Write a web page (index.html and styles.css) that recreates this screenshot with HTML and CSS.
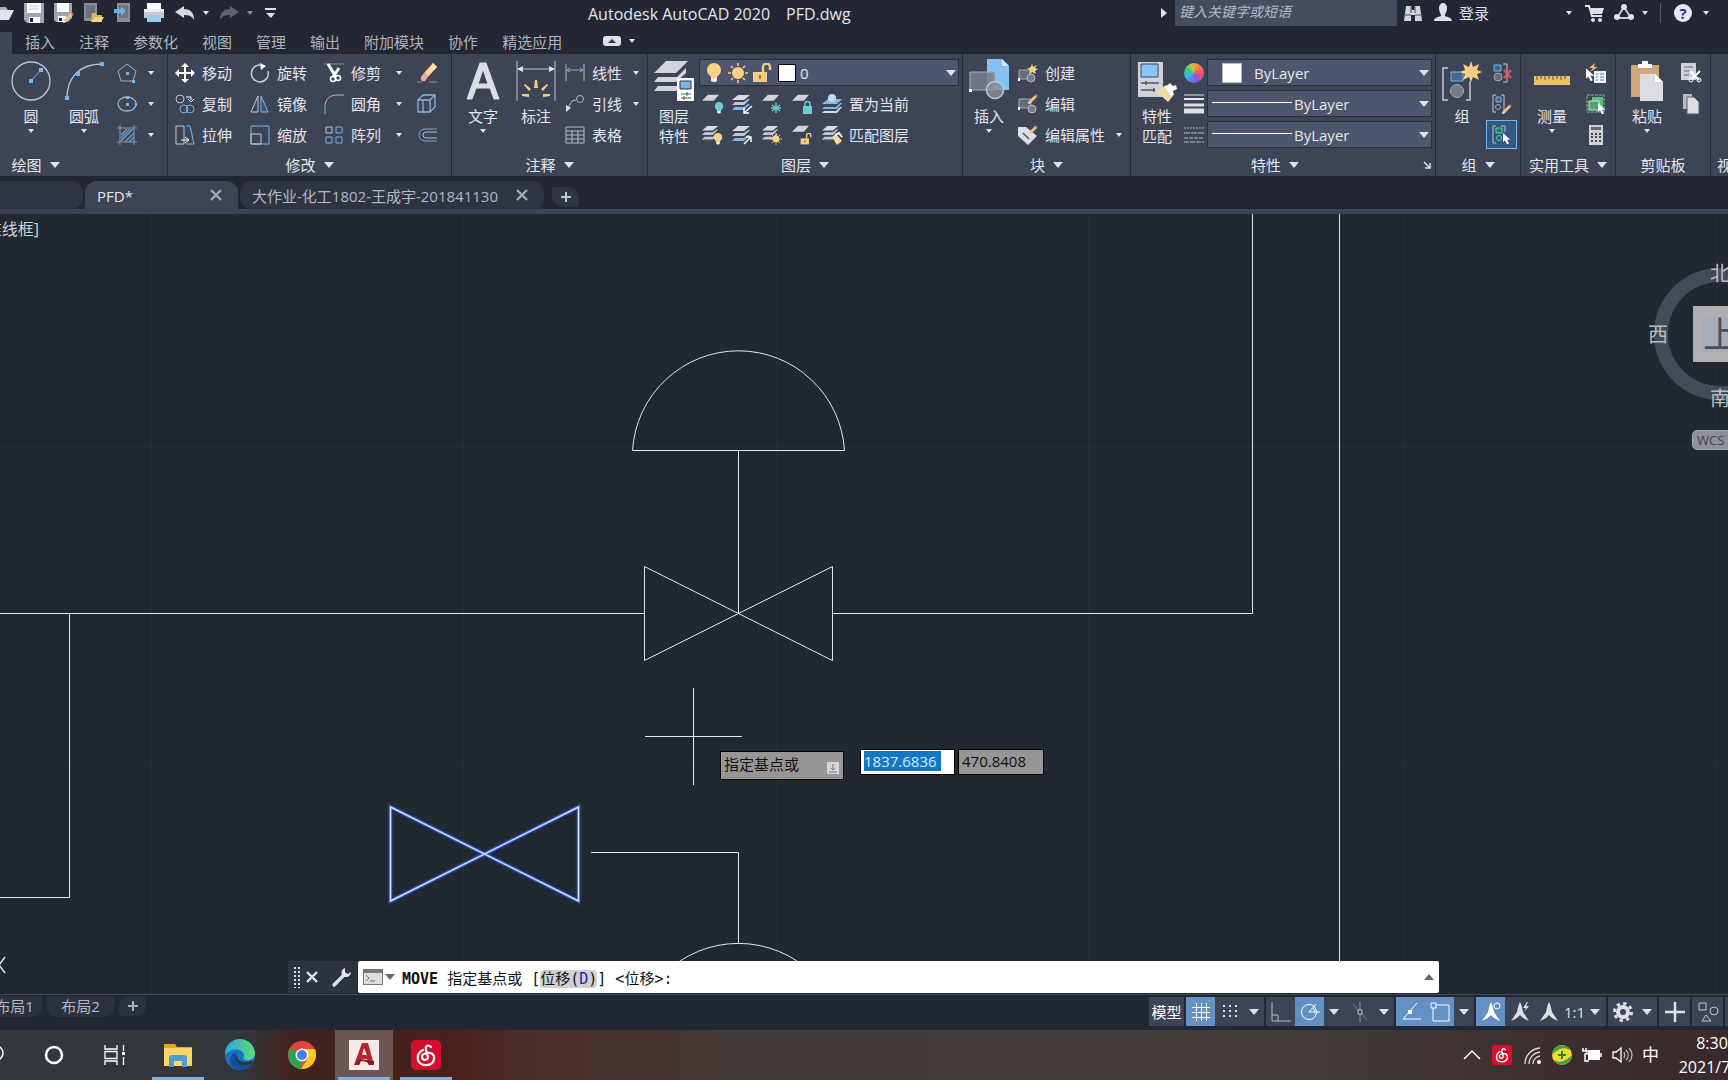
FILE: index.html
```html
<!DOCTYPE html>
<html lang="zh-CN">
<head>
<meta charset="utf-8">
<title>Autodesk AutoCAD 2020 - PFD.dwg</title>
<link rel="stylesheet" href="styles.css">
</head>
<body>
<svg class="sprite" aria-hidden="true">
  <symbol id="sheet" viewBox="0 0 20 20"><path d="M7 1h13l-6 7H0z" fill="#d3d5dd"/></symbol>
  <symbol id="stack" viewBox="0 0 20 20"><path d="M6 1h12l-6 5H0z" fill="#d9dbe2"/><path d="M1 10l2-2h9l4-3h2l-6 6H0zM1 15l2-2h9l4-3h2l-6 6H0z" fill="#c3c6d0"/></symbol>
  <symbol id="stackblue" viewBox="0 0 20 20"><path d="M6 1h12l-6 5H0z" fill="#d9dbe2"/><path d="M1 10l2-2h9l4-3h2l-6 6H0z" fill="#c3c6d0"/><path d="M1 15l2-2h9l4-3h2l-6 6H0z" fill="#7fb9ea"/></symbol>
  <symbol id="bulb" viewBox="0 0 20 20"><circle cx="10" cy="7" r="7" fill="currentColor"/><path d="M6 11h8l-1 4H7z" fill="currentColor"/><path d="M7 15h6v3l-2 1H9l-2-1z" fill="#e9eaf0"/></symbol>
  <symbol id="sun" viewBox="0 0 20 20"><circle cx="10" cy="10" r="6" fill="#f9d286"/><path d="M10 0v3M10 17v3M0 10h3M17 10h3M3 3l2 2M15 15l2 2M17 3l-2 2M3 17l2-2" stroke="#f9d286" stroke-width="1.5"/></symbol>
  <symbol id="unlock" viewBox="0 0 20 20"><path d="M1 9h14v10H1z" fill="#f5cd82"/><path d="M11 9V4a3 3 0 0 1 7 0v3" fill="none" stroke="#f5cd82" stroke-width="2.4"/><path d="M8 12v4" stroke="#a04a20" stroke-width="1.5"/></symbol>
  <symbol id="pencil" viewBox="0 0 20 20"><path d="M0 20l2-6L14 2l4 4L6 18z" fill="#f1c27e"/><path d="M14 2l2-2 4 4-2 2z" fill="#d7685f"/><path d="M0 20l2-6 4 4z" fill="#eee0cb"/></symbol>
  <symbol id="cursor" viewBox="0 0 12 18"><path d="M0 0v14l3-3 3 6 3-1-3-6h5z" fill="#fff"/></symbol>
  <symbol id="music" viewBox="0 0 30 30"><rect width="30" height="30" rx="5" fill="#d60f2c"/><path d="M20 7c-3-3-6-1-5 3l2 7a3 3 0 1 1-4-3c6-3 11 0 10 5-1 8-14 8-16 1-1-5 1-8 5-10" fill="none" stroke="#fff" stroke-width="2.2" stroke-linecap="round"/></symbol>
  <symbol id="north" viewBox="0 0 20 20"><path d="M10 0c2 3 2 7 3 10l6 9-6-3-3-3-3 3-6 3 6-9c1-3 1-7 3-10z" fill="currentColor"/></symbol>
  <symbol id="user" viewBox="0 0 18 20"><path d="M5 5a4 5 0 0 1 8 0c0 4-2 5-2 8 3 1 7 2 7 5H0c0-3 4-4 7-5 0-3-2-4-2-8z" fill="#dfe1e8"/></symbol>
  <symbol id="cross" viewBox="0 0 12 12"><path d="M1 1l10 10M11 1L1 11" stroke="currentColor" stroke-width="2.4"/></symbol>
</svg>

<header class="titlebar">
  <nav class="qat">
    <button aria-label="打开"><svg class="i20"><path d="M6 4h6l2 3h-8z" fill="#a9adb7"/><path d="M0 7h20l-5 10H0z" fill="#e3e4ea"/></svg></button>
    <button aria-label="保存"><svg class="i20"><path d="M0 0h20v20H3l-3-3z" fill="#a3a6ae"/><path d="M3 0h14v10H3z" fill="#fff"/><path d="M5 14h11v6H5z" fill="#fff"/><path d="M5 3h10M5 6h10" stroke="#c6c8ce"/><path d="M6 15h3v4H6z" fill="#222"/></svg></button>
    <button aria-label="另存为"><svg class="i20"><path d="M0 0h18v15l-4 4H2l-2-2z" fill="#a3a6ae"/><path d="M3 0h12v9H3zM4 13h8v6H4z" fill="#fff"/><path d="M5 15h3v3H5z" fill="#222"/><use href="#pencil" x="9" y="9" width="11" height="11"/></svg></button>
    <button aria-label="从移动设备打开"><svg class="i20"><path d="M0 0h13v18H0z" fill="#8a8e99"/><path d="M2 2h9v13H2z" fill="#6d717c"/><path d="M8 10h4l1 2h5v7H7z" fill="#e4b05c"/><path d="M11 14h9l-3 5H8z" fill="#f8d58d"/></svg></button>
    <button aria-label="保存到移动设备"><svg class="i20"><path d="M3 0h13v19H3z" fill="#8a8e99"/><path d="M5 2h9v13H5z" fill="#6d717c"/><path d="M0 6h7V3l5 5-5 5v-3H0z" fill="#64b5ee"/></svg></button>
    <button aria-label="打印"><svg class="i20"><path d="M3 0h14v7H3z" fill="#fff"/><path d="M0 6h20v9H0z" fill="#c6c8ce"/><path d="M0 6h20v3H0z" fill="#eee"/><path d="M3 12h14v7H3z" fill="#9ccbe9"/></svg></button>
    <button class="undo" aria-label="放弃"><svg class="i20"><path d="M0 9l9-6v3c7 0 10 4 10 11-2-4-5-5-10-5v3z" fill="#d8dae2"/></svg><i class="caret"></i></button>
    <button class="undo redo" aria-label="重做"><svg class="i20"><path d="M20 9l-9-6v3C4 6 1 10 1 17c2-4 5-5 10-5v3z" fill="#5d6270"/></svg><i class="caret"></i></button>
    <button aria-label="自定义"><svg class="i20"><path d="M1 6h11" stroke="#dfe1e8" stroke-width="2"/><path d="M2 10h9l-4 5z" fill="#dfe1e8"/></svg></button>
  </nav>
  <h1 class="apptitle"><span>Autodesk AutoCAD 2020</span><span>PFD.dwg</span></h1>
  <i class="play"></i>
  <input class="search" type="text" placeholder="键入关键字或短语" aria-label="搜索">
  <div class="account">
    <button class="b-find" aria-label="查找"><svg class="i20"><path d="M3 3h5l1 4h2l1-4h5l2 15h-7v-6H8v6H1z" fill="#d3d5dc"/><path d="M1 12h7M12 12h7M8 4v6M12 4v6" stroke="#4b5060"/></svg></button>
    <button class="b-login"><svg width="18" height="20"><use href="#user"/></svg>登录<i class="caret"></i></button>
    <button class="b-cart" aria-label="购物车"><svg class="i20"><path d="M0 3h4l3 10h10" fill="none" stroke="#dfe1e8" stroke-width="2"/><path d="M5 5h14l-2 6H7z" fill="#dfe1e8"/><circle cx="8" cy="17" r="2" fill="#dfe1e8"/><circle cx="15" cy="17" r="2" fill="#dfe1e8"/></svg></button>
    <button class="b-a360" aria-label="A360"><svg class="i20"><path d="M10 4L3 15h14z" fill="none" stroke="#c5cbe0" stroke-width="2"/><circle cx="10" cy="4" r="3" fill="#dfe1e8"/><circle cx="3" cy="14" r="3" fill="#dfe1e8"/><circle cx="17" cy="14" r="3" fill="#dfe1e8"/></svg><i class="caret"></i></button>
    <button class="b-help" aria-label="帮助"><span class="help">?</span><i class="caret"></i></button>
  </div>
</header>

<nav class="tabs">
  <i class="tab-on"></i>
  <a href="#">插入</a><a href="#">注释</a><a href="#">参数化</a><a href="#">视图</a><a href="#">管理</a><a href="#">输出</a><a href="#">附加模块</a><a href="#">协作</a><a href="#">精选应用</a>
  <button class="collapse" aria-label="最小化"><svg width="18" height="10"><rect width="18" height="10" rx="3" fill="#dfe1e8"/><path d="M5 7l4-4 4 4z" fill="#333846"/></svg><i class="caret"></i></button>
</nav>

<section class="ribbon">
  <div class="panel p-draw">
    <div class="body">
      <button class="big"><svg class="i40"><circle cx="20" cy="20" r="19" fill="none" stroke="#c3c7d2"/></svg><span>直线</span></button>
      <button class="big"><svg class="i40"><circle cx="20" cy="20" r="19" fill="none" stroke="#c3c7d2" stroke-width="1.3"/><path d="M20 20L30 9" stroke="#7db4e8"/><path d="M18 18h4v4h-4zM28 7h4v4h-4z" fill="#7db4e8"/></svg><span>圆</span><i class="caret"></i></button>
      <button class="big"><svg class="i40"><path d="M3 37C3 18 14 3 38 3" fill="none" stroke="#c3c7d2" stroke-width="1.3"/><path d="M1 35h4v4H1zM12 11h4v4h-4zM36 1h4v4h-4z" fill="#7db4e8"/></svg><span>圆弧</span><i class="caret"></i></button>
      <div class="col">
        <button class="sm wide" aria-label="多边形"><svg class="i20"><path d="M10 1l9 7-3 10H4L1 8z" fill="none" stroke="#aab0be"/><path d="M9 9h3v3H9zM15 17h3v3h-3z" fill="#7db4e8"/></svg><i class="caret"></i></button>
        <button class="sm wide" aria-label="椭圆"><svg class="i20"><ellipse cx="10" cy="10" rx="9" ry="7" fill="none" stroke="#aab0be" stroke-width="1.3"/><path d="M9 9h3v3H9zM9 2h3v3H9zM18 9h2v3h-2z" fill="#7db4e8"/></svg><i class="caret"></i></button>
        <button class="sm wide" aria-label="图案填充"><svg class="i20"><path d="M3 0v20M17 0v20M0 3h20M0 17h20" stroke="#8e95a5"/><path d="M4 10l6-6M4 16L16 4M8 17l9-9M4 13l9-9M12 17l5-5" stroke="#6da2d4" stroke-width="1.2"/></svg><i class="caret"></i></button>
      </div>
    </div>
    <div class="title">绘图<i class="caret lg"></i></div>
  </div>

  <div class="panel p-modify">
    <div class="body grid">
      <button class="sm"><svg class="i20"><path d="M10 2v16M2 10h16" stroke="#fff" stroke-width="2"/><path d="M10 0l4 4H6zM10 20l4-4H6zM0 10l4-4v8zM20 10l-4-4v8z" fill="#fff"/></svg>移动</button>
      <button class="sm"><svg class="i20"><path d="M11 2A8.500 8.500 0 1 0 18 8" fill="none" stroke="#c9cdd8" stroke-width="1.500"/><path d="M10 0l6 3-5 4z" fill="#fff"/></svg>旋转</button>
      <button class="sm"><svg class="i20"><path d="M0 1h20" stroke="#8990a0"/><path d="M4 1l8 13M15 5l-6 9" stroke="#fff" stroke-width="3"/><circle cx="9" cy="16" r="2.500" fill="none" stroke="#fff" stroke-width="1.500"/><circle cx="14" cy="15" r="2.500" fill="none" stroke="#fff" stroke-width="1.500"/></svg>修剪<i class="caret"></i></button>
      <button class="sm" aria-label="删除"><svg class="i20"><path d="M0 19h5M12 19h8" stroke="#8990a0"/><path d="M16 0l4 4-9 10-4-4z" fill="#f5cd82"/><path d="M16 0l4 4-2 2-8 5z" fill="#fbe3b0"/><path d="M7 10l4 4-3 4c-3 1-5-1-4-4z" fill="#eab0a5"/></svg></button>
      <button class="sm"><svg class="i20"><circle cx="5" cy="5" r="4" fill="none" stroke="#c3c7d2"/><path d="M11 3h5v3M13 5l3 3 3-3" stroke="#fff" fill="none"/><circle cx="9" cy="15" r="4" fill="none" stroke="#7db4e8"/><circle cx="15" cy="15" r="4" fill="none" stroke="#7db4e8"/></svg>复制</button>
      <button class="sm"><svg class="i20"><path d="M8 2v16H1z" fill="none" stroke="#c3c7d2"/><path d="M11 2v16h7z" fill="#35567c" stroke="#7db4e8"/></svg>镜像</button>
      <button class="sm"><svg class="i20"><path d="M1 20v-7" stroke="#7db4e8"/><path d="M1 13C1 5 6 1 13 1h7" fill="none" stroke="#b4bac8"/></svg>圆角<i class="caret"></i></button>
      <button class="sm" aria-label="分解"><svg class="i20"><path d="M1 6h12v12H1zM1 6l5-5h12v12l-5 5M13 6l5-5M6 6v12" fill="none" stroke="#8db2d8" stroke-width="1.300"/></svg></button>
      <button class="sm"><svg class="i20"><path d="M1 1h8v18H1z" fill="none" stroke="#c3c7d2"/><path d="M11 1h4l4 18h-8" fill="none" stroke="#7db4e8"/><path d="M6 15h7M10 12l4 3-4 3" stroke="#fff" fill="none"/></svg>拉伸</button>
      <button class="sm"><svg class="i20"><path d="M1 1h18v18H1z" fill="none" stroke="#7db4e8"/><path d="M1 9h10v10H1z" fill="none" stroke="#c3c7d2"/></svg>缩放</button>
      <button class="sm"><svg class="i20"><path d="M2 2h6v6H2z" fill="none" stroke="#c3c7d2"/><path d="M12 2h6v6h-6zM2 12h6v6H2zM12 12h6v6h-6z" fill="none" stroke="#7db4e8"/></svg>阵列<i class="caret"></i></button>
      <button class="sm" aria-label="偏移"><svg class="i20"><path d="M20 4H8a6 6 0 0 0 0 12h12" fill="none" stroke="#7da6d0"/><path d="M20 7H9a3 3 0 0 0 0 6h11" fill="none" stroke="#b4bac8"/></svg></button>
    </div>
    <div class="title">修改<i class="caret lg"></i></div>
  </div>

  <div class="panel p-note">
    <div class="body">
      <button class="big"><svg class="i40"><path d="M4 38L17 2h6l13 36h-5l-4-11H13L9 38zM15 23h10L20 8z" fill="#dcdee6" stroke="#dcdee6"/></svg><span>文字</span><i class="caret"></i></button>
      <button class="big"><svg class="i40"><path d="M1 0v40M39 0v40M2 8h36" stroke="#c3c7d2"/><path d="M1 8l6-3v6zM39 8l-6-3v6z" fill="#dfe1e8"/><path d="M18 27l1-8h2l1 8zM13 30l-5-6 1-1 6 5zM27 30l5-6-1-1-6 5zM13 36l-7-1v-2l7 0zM27 36l7-1v-2l-7 0z" fill="#f5cd82"/></svg><span>标注</span></button>
      <div class="col">
        <button class="sm"><svg class="i20"><path d="M1 1v17M19 1v17" stroke="#b4bac8"/><path d="M2 7h16M5 5L2 7l3 2M15 5l3 2-3 2" fill="none" stroke="#7db4e8"/></svg>线性<i class="caret"></i></button>
        <button class="sm"><svg class="i20"><circle cx="15" cy="5" r="3.500" fill="none" stroke="#b4bac8"/><path d="M11 6L7 7 3 14" fill="none" stroke="#b4bac8"/><path d="M1 18v-7l5 3z" fill="#dfe1e8"/></svg>引线<i class="caret"></i></button>
        <button class="sm"><svg class="i20"><path d="M1 2h18v16H1zM1 6h18M1 10h18M1 14h18M7 6v12M13 6v12" fill="none" stroke="#b4bac8"/></svg>表格</button>
      </div>
    </div>
    <div class="title">注释<i class="caret lg"></i></div>
  </div>

  <div class="panel p-layer">
    <div class="body">
      <button class="big two"><svg class="i40"><path d="M12 0h22L22 12H0zM0 21l4-5h19l9-9v5L22 21zM0 30l4-5h19l9-9v5L22 30z" fill="#d3d5dd"/><path d="M23 17h17v23H23z" fill="#fff"/><path d="M26 20h11v8H26z" fill="#7db4e8" stroke="#333"/><path d="M27 33h10M27 37h10M33 31v4M30 35v4" stroke="#555"/></svg><span>图层<br>特性</span></button>
      <div class="col">
        <div class="combo layercombo">
          <svg class="i20 amber"><use href="#bulb"/></svg><svg class="i20"><use href="#sun"/></svg><svg class="i20"><use href="#unlock"/></svg><i class="swatch"></i>
          <select aria-label="图层"><option>0</option></select><i class="caret lg"></i>
        </div>
        <div class="row">
          <button class="sm" aria-label="关闭"><svg class="i20"><use href="#sheet" width="17" height="17"/><use href="#bulb" x="11" y="8" width="12" height="12" color="#69cfd6"/></svg></button>
          <button class="sm" aria-label="隔离"><svg class="i20"><use href="#stackblue"/><path d="M12 19l8-7M12 14v5h5" stroke="#fff" stroke-width="1.500" fill="none"/></svg></button>
          <button class="sm" aria-label="冻结"><svg class="i20"><use href="#sheet" width="17" height="17"/><path d="M14 9v10M10 11l8 6M18 11l-8 6M9 14h10" stroke="#69cfd6" stroke-width="1.500"/></svg></button>
          <button class="sm" aria-label="锁定"><svg class="i20"><use href="#sheet" width="17" height="17"/><path d="M11 12h9v8h-9z" fill="#69cfd6"/><path d="M13 12v-2a2 2 0 0 1 5 0v2" fill="none" stroke="#69cfd6" stroke-width="1.500"/></svg></button>
          <button class="sm"><svg class="i20"><path d="M6 5h14l-5 5H0zM0 15l2-2h12l4-4h2l-5 6z" fill="#7fb9ea"/><path d="M0 19l2-2h12l4-4h2l-5 6z" fill="#d9dbe2"/><circle cx="10" cy="4" r="4" fill="#bcdcf6"/></svg>置为当前</button>
        </div>
        <div class="row">
          <button class="sm" aria-label="打开所有图层"><svg class="i20"><use href="#stack" width="18" height="18"/><use href="#bulb" x="10" y="8" width="12" height="12" color="#f9d286"/></svg></button>
          <button class="sm" aria-label="取消隔离"><svg class="i20"><use href="#stackblue"/><path d="M12 19l7-7M14 12h5v5" stroke="#fff" stroke-width="1.500" fill="none"/></svg></button>
          <button class="sm" aria-label="解冻"><svg class="i20"><use href="#stack" width="18" height="18"/><use href="#sun" x="8" y="8" width="12" height="12"/></svg></button>
          <button class="sm" aria-label="解锁"><svg class="i20"><use href="#sheet" width="17" height="17"/><use href="#unlock" x="8" y="8" width="12" height="12"/></svg></button>
          <button class="sm"><svg class="i20"><use href="#stack" width="18" height="18"/><path d="M10 12l4-3 6 7-5 4z" fill="#f5d9a0"/><path d="M13 10l4-2 3 4" stroke="#fff" stroke-width="2" fill="none"/></svg>匹配图层</button>
        </div>
      </div>
    </div>
    <div class="title">图层<i class="caret lg"></i></div>
  </div>

  <div class="panel p-block">
    <div class="body">
      <button class="big"><svg class="i40"><path d="M18-2h15l7 7v24H18z" fill="#84c2f2"/><path d="M33-2v7h7z" fill="#cfe7fa"/><path d="M1 11h25v18H1z" fill="#7b7f8c" fill-opacity=".85" stroke="#a5a9b3"/><circle cx="26" cy="29" r="8.500" fill="#8b8f9b" fill-opacity=".8" stroke="#c3c7d2" stroke-width="1.500"/><path d="M0 28h3v3H0z" fill="#fff"/></svg><span>插入</span><i class="caret"></i></button>
      <div class="col">
        <button class="sm"><svg class="i20"><path d="M1 7h12v9H1z" fill="#666b7a" stroke="#a5a9b3"/><circle cx="13" cy="15" r="4" fill="#777c8a" stroke="#b5b9c4"/><path d="M14 0l1 4 4-2-2 3 3 1-3 2 1 3-4-2-3 2 1-4-3-1 4-2z" fill="#f9cf82"/><path d="M0 15h2v3H0z" fill="#fff"/></svg>创建</button>
        <button class="sm"><svg class="i20"><path d="M1 5h12v9H1z" fill="#666b7a" stroke="#a5a9b3"/><circle cx="14" cy="15" r="4" fill="#777c8a" stroke="#b5b9c4"/><use href="#pencil" x="10" y="0" width="10" height="10"/><path d="M0 13h2v3H0z" fill="#fff"/></svg>编辑</button>
        <button class="sm"><svg class="i20"><path d="M0 2h8l11 9-9 9L0 11z" fill="#dcdee6"/><path d="M5 8l6 6" stroke="#555" stroke-width="1.500"/><use href="#pencil" x="10" y="0" width="10" height="10"/></svg>编辑属性<i class="caret"></i></button>
      </div>
    </div>
    <div class="title">块<i class="caret lg"></i></div>
  </div>

  <div class="panel p-props">
    <div class="body">
      <button class="big two"><svg class="i40"><path d="M1 1h25v35H1z" fill="#d0d2d9"/><path d="M4 3h17v13H4z" fill="#86c5f4" stroke="#444"/><path d="M4 22h18M4 29h14M9 20v4M17 27v4" stroke="#555" stroke-width="1.500"/><path d="M19 30l9-5 8 10-5 6z" fill="#f5d9a0"/><path d="M27 25l4-1 2-2 3 3 3-1 1 4-4 2 1 4-3 1z" fill="#fff"/></svg><span>特性<br>匹配</span></button>
      <div class="col icons">
        <i class="wheel"></i>
        <svg class="i20"><path d="M0 1h20" stroke="#dfe1e8"/><path d="M0 5h20" stroke="#dfe1e8" stroke-width="2"/><path d="M0 11h20" stroke="#dfe1e8" stroke-width="3"/><path d="M0 17h20" stroke="#dfe1e8" stroke-width="5"/></svg>
        <svg class="i20"><path d="M0 3h20" stroke="#b4bac8" stroke-dasharray="2 1"/><path d="M0 8h20" stroke="#b4bac8" stroke-dasharray="6 1"/><path d="M0 13h20" stroke="#b4bac8" stroke-dasharray="4 1"/><path d="M0 17h20" stroke="#b4bac8" stroke-dasharray="5 1"/></svg>
      </div>
      <div class="col combos">
        <div class="combo"><i class="swatch light"></i><select aria-label="颜色"><option>ByLayer</option></select><i class="caret lg"></i></div>
        <div class="combo"><i class="rule"></i><select aria-label="线宽"><option>ByLayer</option></select><i class="caret lg"></i></div>
        <div class="combo"><i class="rule"></i><select aria-label="线型"><option>ByLayer</option></select><i class="caret lg"></i></div>
      </div>
    </div>
    <div class="title"><span class="grow">特性<i class="caret lg"></i></span><svg width="12" height="12"><path d="M3 3l5 5M9 4v5H4" stroke="#dfe1e8" stroke-width="1.500" fill="none"/></svg></div>
  </div>

  <div class="panel p-group">
    <div class="body">
      <button class="big"><svg class="i40"><path d="M6 7H1v32h5M24 39h4V20" fill="none" stroke="#c3c7d2" stroke-width="1.500"/><path d="M9 11h12v9H9z" fill="#41698f" stroke="#7db4e8"/><circle cx="15" cy="30" r="6.500" fill="#767b88" stroke="#a5a9b3"/><path d="M29 0l2 6 6-3-2 6 5 2-5 2 2 6-6-3-2 5-2-5-6 3 2-6-5-2 5-2-2-6 6 3z" fill="#f9cf82"/></svg><span>组</span></button>
      <div class="col">
        <button class="sm" aria-label="解除编组"><svg class="i20"><path d="M2 2h7v6H2z" fill="#41698f" stroke="#7db4e8"/><circle cx="6" cy="14" r="4" fill="#666b7a" stroke="#a5a9b3"/><path d="M11 1h4v18h-4" fill="none" stroke="#c3c7d2"/><path d="M12 7l7 8M19 7l-7 8" stroke="#e05560" stroke-width="2"/></svg></button>
        <button class="sm" aria-label="组编辑"><svg class="i20"><path d="M4 1H1v17h3M9 1h3v17" fill="none" stroke="#c3c7d2"/><path d="M4 3h5v5H4z" fill="#41698f" stroke="#7db4e8"/><circle cx="6" cy="13" r="2.500" fill="none" stroke="#a5a9b3"/><use href="#pencil" x="10" y="10" width="10" height="10"/></svg></button>
        <button class="sm on" aria-label="组选择"><svg class="i20"><path d="M4 1H1v17h3M9 1h4v6" fill="none" stroke="#c3c7d2"/><path d="M4 3h6v5H4z" fill="#2c7a66" stroke="#5fd19a"/><circle cx="7" cy="13" r="2.500" fill="none" stroke="#5fd19a"/><use href="#cursor" x="11" y="8" width="8" height="12"/></svg></button>
      </div>
    </div>
    <div class="title">组<i class="caret lg"></i></div>
  </div>

  <div class="panel p-util">
    <div class="body">
      <button class="big"><svg class="i40"><path d="M2 15h36v9H2z" fill="#f0bf6a"/><path d="M5 15v4M9 15v3M13 15v4M17 15v3M21 15v4M25 15v3M29 15v4M33 15v3" stroke="#5b4a2c"/></svg><span>测量</span><i class="caret"></i></button>
      <div class="col">
        <button class="sm" aria-label="快速选择"><svg class="i20"><path d="M9 0L3 5h4L4 9l8-5H8z" fill="#f5b76c"/><use href="#cursor" x="0" y="5" width="9" height="14"/><path d="M8 8h12v12H8z" fill="#eef4fa"/><path d="M10 11h2M14 11h4M10 14h2M14 14h4M10 17h2M14 17h4" stroke="#4b7fb0"/></svg></button>
        <button class="sm" aria-label="全部选择"><svg class="i20"><path d="M1 1h17v17H1z" fill="none" stroke="#5fd19a" stroke-dasharray="3 1"/><path d="M6 3h11v10H6z" fill="#60bd7b"/><path d="M3 7h10v9H3z" fill="#4fa56b" stroke="#c8f0d4"/><use href="#cursor" x="12" y="9" width="8" height="12"/></svg></button>
        <button class="sm" aria-label="计算器"><svg class="i20"><path d="M3 0h14v20H3z" fill="#cfd1d8"/><path d="M5 2h10v3H5z" fill="#666"/><path d="M5 9h10M5 12h10M5 16h10" stroke="#444" stroke-width="2" stroke-dasharray="2 2"/></svg></button>
      </div>
    </div>
    <div class="title">实用工具<i class="caret lg"></i></div>
  </div>

  <div class="panel p-clip">
    <div class="body">
      <button class="big"><svg class="i40"><path d="M4 4h28v32H4z" fill="#d0a87a"/><path d="M11 3h4V0h6v3h4v4H11z" fill="#fff"/><path d="M13 13h15l8 8v19H13z" fill="#dcdce1"/><path d="M28 13v8h8z" fill="#fff"/></svg><span>粘贴</span><i class="caret"></i></button>
      <div class="col">
        <button class="sm" aria-label="剪切"><svg class="i20"><path d="M0 0h15v17H0z" fill="#cfd1d8"/><path d="M3 4h9M3 8h7M3 12h5" stroke="#666"/><path d="M9 8l9 9M19 8l-8 8" stroke="#fff" stroke-width="2"/><circle cx="10" cy="17" r="2" fill="none" stroke="#fff"/><circle cx="18" cy="17" r="2" fill="none" stroke="#fff"/></svg></button>
        <button class="sm" aria-label="复制"><svg class="i20"><path d="M2 0h9v15H2z" fill="#b8bac2"/><path d="M6 3h7l5 5v12H6z" fill="#dcdce1" stroke="#555a68"/></svg></button>
      </div>
    </div>
    <div class="title">剪贴板</div>
  </div>
  <div class="panel p-view"><div class="body"></div><div class="title">视图</div></div>
</section>

<nav class="files">
  <a class="ftab start" href="#" aria-label="开始"></a>
  <a class="ftab cur" href="#">PFD*<svg width="12" height="12"><use href="#cross"/></svg></a>
  <a class="ftab third" href="#">大作业-化工1802-王成宇-201841130<svg width="12" height="12"><use href="#cross"/></svg></a>
  <button class="fplus" aria-label="新图形"><svg width="12" height="12"><path d="M6 1v10M1 6h10" stroke="#c3c7d2" stroke-width="2"/></svg></button>
</nav>

<main class="canvas">
  <svg class="drawing" aria-hidden="true">
    <g transform="translate(0 -214)" fill="none" stroke="#e4e7ea">
      <path d="M151.500 214v781M463.500 214v781M776.500 214v781M1403.500 214v781M1716.500 214v781M0 447.500h1728M0 761.500h1728" stroke="#262d38"/>
      <path d="M1089.500 214v781" stroke="#293148"/>
      <path d="M1252.500 214v399.500M1339.500 214v760M0 613.500h644.500M832.500 613.500h420M69.500 613.500v284H0"/>
      <path d="M632.500 450.500A106.200 106.200 0 0 1 844.500 450.500zM738.500 450.500v163"/>
      <path d="M644.500 566.500v94l188-94v94z"/>
      <path d="M645 736.500h97M693.500 688v97"/>
      <path d="M591 852.500h147.500v91M664 974A106 106 0 0 1 813 974"/>
      <path d="M390.500 807v94l188-94v94z" stroke="#1f3f9a" stroke-width="6" stroke-opacity=".5"/>
      <path d="M390.500 807v94l188-94v94z" stroke="#3a5fc4" stroke-width="3"/>
      <path d="M390.500 807v94l188-94v94z" stroke="#cfdcfb" stroke-width="1.500"/>
      <path d="M5 957l-6 8 6 8" stroke-width="1.500"/>
    </g>
  </svg>
  <div class="viewlabel">[-][俯视][二维线框]</div>

  <div class="cube">
    <i class="ring"></i>
    <span class="dir n">北</span><span class="dir w">西</span><span class="dir s">南</span>
    <span class="face"><b>上</b></span>
    <button class="wcs">WCS</button>
  </div>

  <div class="tip">指定基点或<svg width="12" height="12"><rect width="12" height="12" fill="#d5d5d7"/><path d="M6 2v6M4 6l2 2 2-2M2 10h8" stroke="#777" fill="none"/></svg></div>
  <div class="coords"><input class="cx" value="1837.6836" aria-label="X"><input class="cy" value="470.8408" aria-label="Y"></div>

  <div class="cmd">
    <div class="handle">
      <i class="grip"></i>
      <button aria-label="关闭"><svg width="12" height="12"><use href="#cross"/></svg></button>
      <button aria-label="自定义"><svg class="i20"><path d="M2 18L13 7" stroke="#dfe1e8" stroke-width="3.500" stroke-linecap="round"/><path d="M13 1a5 5 0 0 0-3 7l3 2a5 5 0 0 0 6-5l-3 2-3-1V3z" fill="#dfe1e8"/></svg></button>
    </div>
    <div class="line">
      <svg width="20" height="16"><rect x=".5" y=".5" width="19" height="15" fill="#ddd" stroke="#777"/><path d="M0 0h20v4H0z" fill="#777"/><path d="M3 6l3 3-3 3M7 12h5" stroke="#777" fill="none"/></svg><i class="caret dark"></i>
      <p><b>MOVE</b> 指定基点或 [<a href="#">位移(<em>D</em>)</a>] &lt;位移&gt;:</p>
      <i class="up"></i>
    </div>
  </div>
</main>

<footer class="status">
  <nav class="layouts">
    <a class="l1" href="#">布局1</a><a href="#">布局2</a>
    <button aria-label="新建布局"><svg width="12" height="12"><path d="M6 1v10M1 6h10" stroke="#a9adb8" stroke-width="2"/></svg></button>
  </nav>
  <div class="modes">
    <div class="grp"><button class="model">模型</button></div>
    <div class="grp">
      <button class="on" aria-label="栅格"><svg class="i20"><path d="M5.500 1v18M10.500 1v18M15.500 1v18M1 5.500h18M1 10.500h18M1 15.500h18" stroke="#fff"/></svg></button>
      <button aria-label="捕捉"><svg class="i20"><path d="M3 4h14M3 9h14M3 14h14" stroke="#dfe1e8" stroke-width="2" stroke-dasharray="2 4"/></svg></button><i class="caret lg"></i>
    </div>
    <div class="grp">
      <button aria-label="正交"><svg class="i20"><path d="M1 0v19h19M1 13h6v6" fill="none" stroke="#b4bac8"/></svg></button>
      <button class="on" aria-label="极轴"><svg class="i20"><circle cx="9" cy="10" r="7.500" fill="none" stroke="#fff"/><path d="M9 10h11M9 10l7-8M13 6l2 4" stroke="#fff" fill="none"/></svg></button><i class="caret lg"></i>
      <button aria-label="等轴测"><svg class="i20"><path d="M10 0v20" stroke="#8990a0"/><path d="M3 2l14 16" stroke="#a07878"/><path d="M8 8h4v4H8z" fill="#3d4456" stroke="#b4bac8"/></svg></button><i class="caret lg"></i>
    </div>
    <div class="grp">
      <button class="on" aria-label="对象捕捉追踪"><svg class="i20"><path d="M16 1L2 17h18" fill="none" stroke="#fff"/><path d="M7 8h4v4H7z" fill="#fff"/></svg></button>
      <button class="on" aria-label="对象捕捉"><svg class="i20"><path d="M3 3h16v16H3z" fill="none" stroke="#fff"/><path d="M1 1h5v5H1z" fill="#6590c4" stroke="#fff"/></svg></button><i class="caret lg"></i>
    </div>
    <div class="grp">
      <button class="on" aria-label="注释可见性"><svg class="i20"><use href="#north" color="#fff"/><circle cx="16" cy="4" r="3" fill="#6590c4" stroke="#fff"/></svg></button>
      <button aria-label="自动缩放"><svg class="i20"><use href="#north"/><path d="M17 0l-4 6h3l-2 4 5-6h-3l2-4z" fill="#dfe1e8"/></svg></button>
      <button aria-label="注释比例"><svg class="i20"><use href="#north"/></svg></button>
      <button class="scale">1:1<i class="caret lg"></i></button>
    </div>
    <div class="grp">
      <button aria-label="切换工作空间"><svg class="i20"><circle cx="10" cy="10" r="5" fill="none" stroke="#dfe1e8" stroke-width="4"/><circle cx="10" cy="10" r="8.500" fill="none" stroke="#dfe1e8" stroke-width="3" stroke-dasharray="3.300 3.370"/></svg></button><i class="caret lg"></i>
    </div>
    <div class="grp"><button aria-label="注释监视器"><svg class="i20"><path d="M10 0v20M0 10h20" stroke="#dfe1e8" stroke-width="2.500"/></svg></button></div>
    <div class="grp"><button aria-label="隔离对象"><svg class="i20"><path d="M1 1h7v7H1zM8 13l5 6H4z" fill="none" stroke="#c3c7d2"/><circle cx="16" cy="9" r="4" fill="none" stroke="#c3c7d2"/></svg></button></div>
    <div class="grp sliver"></div>
  </div>
</footer>

<footer class="taskbar">
  <div class="apps">
    <button aria-label="搜索"><svg width="30" height="30"><circle cx="19" cy="13" r="7" fill="none" stroke="#fff" stroke-width="1.500"/></svg></button>
    <button aria-label="Cortana"><svg width="30" height="30"><circle cx="15" cy="15" r="8" fill="none" stroke="#fff" stroke-width="2.500"/></svg></button>
    <button aria-label="任务视图"><svg width="30" height="30"><path d="M4 5v4h12V5M4 25v-4h12v4M4 11.500h12v7H4zM22.500 5v6M22.500 17v8" stroke="#fff" fill="none" stroke-width="1.300"/><path d="M21 12h3v3h-3z" fill="#fff"/></svg></button>
    <button class="run" aria-label="文件资源管理器"><svg width="30" height="30"><path d="M1 4h11l2 3h15v19H1z" fill="#e5a62d"/><path d="M1 8h28v18H1z" fill="#fbd667"/><path d="M6 27v-9c0-2 1-3 3-3h12c2 0 3 1 3 3v9h-5v-6h-8v6z" fill="#4b9cd3"/></svg></button>
    <button aria-label="Edge"><svg width="30" height="30"><defs><linearGradient id="ea" x1="0" x2="1"><stop offset="0" stop-color="#2aa5e0"/><stop offset="1" stop-color="#5ddc72"/></linearGradient></defs><circle cx="15" cy="15" r="15" fill="#1673c8"/><path d="M0 15a15 15 0 0 1 30-2c0 6-5 8-10 7-2-1-2-2-1-4 1-6-10-9-15-4-2 1-3 2-4 3z" fill="url(#ea)"/><path d="M11 16c0 6 7 10 16 7-4 7-14 9-20 3-5-5-1-12 5-14z" fill="#0d4f9e"/><path d="M14 13c-4 3-1 9 6 9 3 0 6-1 8-2l-1 4c-9 3-17 0-16-7z" fill="#333133"/></svg></button>
    <button aria-label="Chrome"><svg width="30" height="30"><circle cx="15" cy="15" r="14" fill="#e2453a"/><path d="M15 15L3 8a14 14 0 0 0 11 21z" fill="#2fa24f"/><path d="M15 15h14a14 14 0 0 1-15 14l7-11z" fill="#fbc91f"/><path d="M15 9h13a14 14 0 0 1 1 6l-7 3z" fill="#fbc91f"/><circle cx="15" cy="15" r="6.500" fill="#fff"/><circle cx="15" cy="15" r="5" fill="#4180e8"/></svg></button>
    <button class="run active" aria-label="AutoCAD"><svg width="30" height="30"><path d="M0 0h30v30H0z" fill="#f6e9e7"/><path d="M5 25L13 3h6l6 22h-5l-2-6h-6l-2 6z" fill="#b3262b"/><path d="M13 15l2-7 3 7z" fill="#f6e9e7"/><path d="M5 25l6-6 14 2v4h-5l-2-3-6-1-2 4z" fill="#8a1a20"/></svg></button>
    <button class="run" aria-label="网易云音乐"><svg width="30" height="30"><use href="#music"/></svg></button>
  </div>
  <div class="tray">
    <svg class="i20"><path d="M2 14l8-8 8 8" fill="none" stroke="#fff" stroke-width="1.500"/></svg>
    <svg class="i20"><use href="#music"/></svg>
    <svg class="i20"><g fill="none" stroke="#ddd" stroke-width="1.300"><path d="M3 19A16 16 0 0 1 18 3M7 19A12 12 0 0 1 18 7M11 19a8 8 0 0 1 7-8"/></g><circle cx="17" cy="17" r="2" fill="#fff"/></svg>
    <svg class="i20"><circle cx="10" cy="10" r="10" fill="#f6d730"/><path d="M0 10a10 10 0 0 1 19-4C14 2 8 2 0 10zM20 10a10 10 0 0 1-19 4c5 4 11 4 19-4z" fill="#38a24c"/><path d="M10 6v8M6 10h8" stroke="#23823a" stroke-width="2"/></svg>
    <svg class="i20"><path d="M6 5h12v10H6z" fill="#fff"/><path d="M19 8v4M1 3v3M4 3v3M0 6h5v3H3v7h4" stroke="#fff" fill="none" stroke-width="1.500"/></svg>
    <svg class="i20"><path d="M1 7h3l5-4v14l-5-4H1z" fill="none" stroke="#fff" stroke-width="1.300"/><path d="M12 7c1 2 1 4 0 6M14 5c3 3 3 7 0 10M17 3c4 4 4 10 0 14" fill="none" stroke="#bbb" stroke-width="1.300"/></svg>
    <span class="ime">中</span>
    <time class="clock"><span>8:30</span><span>2021/7/3</span></time>
  </div>
</footer>
</body>
</html>
```
FILE: styles.css
```css
* { box-sizing: border-box; }
html, body { margin: 0; height: 100%; }
body {
  display: flex;
  flex-direction: column;
  min-height: 100vh;
  overflow: hidden;
  background: #222733;
  color: #e4e6ee;
  font: 15px/20px "Open Sans", "Noto Sans CJK SC", sans-serif;
}
button, input, select { font: inherit; color: inherit; border: 0; background: none; padding: 0; margin: 0; }
button { display: flex; align-items: center; white-space: nowrap; }
a { color: inherit; text-decoration: none; white-space: nowrap; }
svg { display: block; flex: none; overflow: visible; }
.sprite { position: absolute; width: 0; height: 0; }
.i20 { width: 20px; height: 20px; }
.i40 { width: 40px; height: 40px; }
.amber { color: #f9d286; }
.caret { flex: none; width: 0; height: 0; border: 3px solid transparent; border-top: 4px solid #dfe1e8; border-bottom: 0; }
.caret.lg { border-width: 5px; border-top-width: 6px; border-bottom: 0; }
.caret.dark { border-width: 5px; border-top: 6px solid #666; border-bottom: 0; }

/* title bar */
.titlebar { flex: none; display: flex; align-items: center; height: 26px; overflow: hidden; }
.qat { display: flex; gap: 10px; flex: none; width: 588px; margin-left: -6px; padding-right: 6px; }
.undo { gap: 8px; margin-left: 1px; width: 35px; }
.redo { margin-left: -1px; }
.redo .caret { border-top-color: #888d99; }
.apptitle { flex: 1; display: flex; gap: 16px; margin: 0; padding: 2px 0 0 6px; font-size: 16px; font-weight: 400; }
.play { border: 5px solid transparent; border-left: 6px solid #dfe1e8; border-right: 0; margin-right: 8px; }
.search { width: 222px; height: 26px; background: #454c5f; padding: 0 4px 4px; font-size: 14px; font-style: italic; }
.search::placeholder { color: #b4b9c6; opacity: 1; }
.account { display: flex; width: 331px; padding-left: 6px; }
.b-find { width: 31px; }
.b-login { width: 151px; gap: 7px; }
.b-login .caret { margin-left: 70px; }
.b-cart { width: 29px; }
.b-a360 { gap: 8px; width: 47px; border-right: 1px solid #555b6b; }
.b-help { gap: 11px; padding-left: 13px; }
.help { width: 18px; height: 18px; border-radius: 9px; background: #e6e8f2; color: #28357c; font-weight: 700; line-height: 18px; }

/* ribbon tabs */
.tabs { flex: none; display: flex; align-items: center; gap: 24px; height: 28px; color: #b0b4bf; }
.tabs a { padding-top: 4px; }
.tab-on { width: 12px; height: 22px; margin: 6px -11px 0 0; background: #3d4456; }
.collapse { gap: 8px; margin: 2px 0 0 17px; }

/* ribbon */
.ribbon { flex: none; display: flex; height: 122px; margin-left: -96px; background: #3d4456; overflow: hidden; }
.panel { flex: none; display: flex; flex-direction: column; border-right: 1px solid #252a37; }
.body { flex: 1; display: flex; padding-top: 3px; }
.title { height: 23px; display: flex; align-items: center; justify-content: center; gap: 8px; white-space: nowrap; }
.grow { flex: 1; display: flex; align-items: center; justify-content: center; gap: 8px; }
.big { flex-direction: column; width: 40px; padding-top: 4px; align-self: flex-start; }
.big span { margin-top: 5px; }
.big .caret { margin-top: 3px; }
.col { display: grid; grid-auto-rows: 31px; align-content: start; }
.sm { height: 31px; gap: 7px; }
.sm .caret { margin-left: 8px; }
.p-draw { width: 264px; }
.p-draw .body { padding-left: 54px; gap: 13px; }
.p-draw .wide { gap: 3px; }
.p-modify { width: 284px; }
.grid { display: grid; grid-template-columns: 75px 74px 93px 20px; grid-auto-rows: 31px; padding-left: 7px; }
.p-note { width: 196px; }
.p-note .body { padding-left: 11px; gap: 13px; }
.p-note .col { margin-left: -4px; }
.p-note .sm .caret { margin-left: 4px; }
.p-layer { width: 315px; }
.p-layer .body { padding-left: 6px; gap: 5px; }
.row { display: flex; gap: 10px; padding-left: 3px; }
.combo { display: flex; align-items: center; height: 27px; margin: 2px 0; background: #4d566c; border: 1px solid #2b303e; padding-right: 2px; }
.combo select { flex: 1; appearance: none; }
.layercombo { width: 260px; gap: 4px; padding-left: 4px; }
.swatch { width: 18px; height: 18px; margin-left: 2px; background: #fff; border: 1px solid #000; }
.swatch.light { width: 20px; height: 20px; margin: 0 12px 0 14px; border-color: #bbb; }
.rule { width: 80px; height: 1px; margin: 0 2px 2px 4px; background: #fff; }
.p-block { width: 168px; }
.p-block .body { padding-left: 6px; gap: 9px; }
.p-block .sm .caret { margin-left: 4px; }
.p-props { width: 305px; }
.p-props .body { padding-left: 6px; gap: 7px; }
.p-props .title { padding: 0 2px 0 6px; }
.icons { place-items: center; }
.wheel { width: 20px; height: 20px; border-radius: 10px; background: conic-gradient(#f6a53c, #f26b4f 60deg, #e04a8a 110deg, #8a55f0 160deg, #5d7df5 200deg, #3fb4e0 240deg, #3cc98f 300deg, #b7d04a 340deg, #f6a53c); }
.combos { width: 225px; margin-left: -4px; }
.p-group { width: 85px; }
.p-group .body { padding-left: 6px; gap: 5px; }
.p-group .sm { width: 29px; justify-content: center; }
.p-group .sm.on { height: 27px; margin: 2px 0; background: #31587f; outline: 1px solid #7db4e8; }
.p-util { width: 95px; }
.p-util .body { padding-left: 11px; gap: 14px; }
.p-clip { width: 95px; }
.p-clip .body { padding-left: 11px; gap: 14px; }
.p-view { flex: 1; min-width: 0; border: 0; }
.p-view .title { justify-content: flex-start; padding-left: 6px; }

/* drawing tabs */
.files { flex: none; display: flex; height: 38px; padding-top: 5px; border-bottom: 5px solid #3d4456; gap: 2px; color: #b4b8c4; }
.ftab { display: flex; align-items: center; height: 28px; border-radius: 12px 12px 0 0; background: #2f3443; padding: 2px 0 0 12px; }
.ftab svg { color: #a5a9b5; margin-bottom: 2px; }
.start { width: 83px; border-radius: 0 12px 12px 0; }
.cur { width: 153px; justify-content: space-between; padding-right: 16px; background: #3d4456; color: #e4e6ee; }
.third { width: 304px; padding-right: 16px; justify-content: space-between; border-radius: 12px 12px 8px 12px; }
.fplus { width: 27px; height: 20px; margin: 6px 0 0 6px; justify-content: center; background: #2f3443; border-radius: 3px 12px 3px 12px; }

/* drawing area */
.canvas { position: relative; flex: 1; background: #21282f; overflow: hidden; border-bottom: 1px solid #434857; }
.drawing { position: absolute; inset: 0; width: 100%; height: 100%; }
.viewlabel { position: absolute; top: 5px; right: calc(100% - 39px); white-space: nowrap; font-size: 16px; color: #d0d3da; }
.cube { position: absolute; right: -58px; top: 54px; width: 132px; height: 182px; color: #b9bcc4; font-size: 20px; line-height: 20px; }
.ring { position: absolute; left: 0; top: 0; width: 132px; height: 132px; border: 14px solid #454b56; border-radius: 66px; }
.dir { position: absolute; }
.n { left: 56px; top: -4px; }
.w { left: -6px; top: 57px; }
.s { left: 56px; top: 121px; }
.face { position: absolute; left: 39px; top: 38px; width: 56px; height: 56px; border: 10px solid #b0b0b4; background: #a7adb8; color: #4a4f59; }
.face b { display: block; font: 400 36px/32px "Noto Sans CJK SC", sans-serif; }
.wcs { position: absolute; left: 38px; top: 162px; width: 70px; height: 20px; padding-left: 4px; border-radius: 5px; background: #8d9098; border: 1px solid #a9abb2; color: #40444e; font-size: 13px; line-height: 16px; }
.tip { position: absolute; left: 720px; top: 537px; width: 124px; height: 29px; display: flex; align-items: center; justify-content: space-between; padding: 0 4px 4px 3px; background: #989597; border: 1px solid #000; color: #111; }
.tip svg { align-self: flex-end; margin-bottom: 1px; }
.coords { position: absolute; left: 860px; top: 535px; display: flex; gap: 3px; }
.coords input { width: 95px; height: 26px; border: 1px solid #000; padding: 0 0 2px 3px; }
.coords .cx { background: linear-gradient(#1676c4, #1676c4) 3px 1px / 77px 20px no-repeat #fff; color: #c8ecff; }
.coords .cy { width: 86px; background: #989597; color: #111; }

/* command line */
.cmd { position: absolute; left: 288px; right: 289px; bottom: 1px; height: 32px; display: flex; }
.handle { width: 70px; display: flex; align-items: center; padding-left: 5px; gap: 6px; background: #2d3241; }
.handle button + button { margin-left: 8px; }
.grip { width: 7px; height: 22px; background: radial-gradient(#dfe1e8 1px, transparent 1px) 0 0 / 4px 4px; }
.line { flex: 1; display: flex; align-items: center; padding: 0 5px; background: #fff; color: #111; border-radius: 2px; }
.line .caret { margin: 0 7px 0 2px; }
.line p { flex: 1; margin: 0; padding-top: 3px; font: 15px/20px "DejaVu Sans Mono", "Noto Sans CJK SC", monospace; white-space: pre; }
.line p a { background: #d0d0d2; border-radius: 4px; }
.line em { font-style: normal; color: #2222a8; }
.up { border: 5px solid transparent; border-bottom: 6px solid #666; border-top: 0; }

/* status bar */
.status { flex: none; display: flex; justify-content: space-between; height: 35px; background: #222734; color: #b4b8c4; }
.layouts { display: flex; gap: 5px; padding-top: 1px; margin-left: -13px; }
.layouts a { height: 21px; width: 67px; text-align: center; background: #2c3140; border-radius: 0 0 10px 10px; }
.layouts .l1 { width: 55px; }
.layouts button { width: 27px; height: 20px; justify-content: center; background: #2c3140; border-radius: 10px 3px; }
.modes { display: flex; gap: 2px; padding: 2px 0 4px; color: #dfe1e8; }
.grp { display: flex; align-items: center; height: 29px; background: #3d4456; padding-right: 4px; }
.grp button { width: 29px; height: 29px; justify-content: center; }
.grp .caret { margin: 0 1px 0 5px; }
.grp .on { background: #6590c4; }
.grp .caret + button { margin-left: 5px; }
.grp:first-child, .grp:nth-child(7), .grp:nth-child(8) { padding: 0 1px; }
.grp .model { width: 33px; color: #fff; }
.grp .scale { width: 39px; }
.sliver { width: 3px; padding: 0; }

/* taskbar */
.taskbar { flex: none; display: flex; justify-content: space-between; height: 50px; background: linear-gradient(90deg, #31373b 0, #33363a 14%, #40221f 17%, #4a201d 26%, #4a2b28 30%, #443a37 42%, #443d3a 75%, #3b2c2d 92%, #3a2a2d); overflow: hidden; color: #fff; }
.apps { display: flex; margin-left: -39px; }
.apps button { width: 62px; justify-content: center; border-bottom: 3px solid transparent; padding-top: 3px; }
.apps .run { border-image: linear-gradient(90deg, transparent 5px, #7fb0dc 5px, #7fb0dc 57px, transparent 57px) 0 0 3; }
.apps .active { background: linear-gradient(90deg, transparent 2px, #6d5554 2px, #6d5554 60px, transparent 60px); }
.tray { display: flex; align-items: center; gap: 10px; }
.ime { font-size: 17px; }
.clock { width: 76px; margin: 0 -22px 0 5px; display: flex; flex-direction: column; gap: 4px; align-items: center; font-size: 16px; white-space: nowrap; }
```
